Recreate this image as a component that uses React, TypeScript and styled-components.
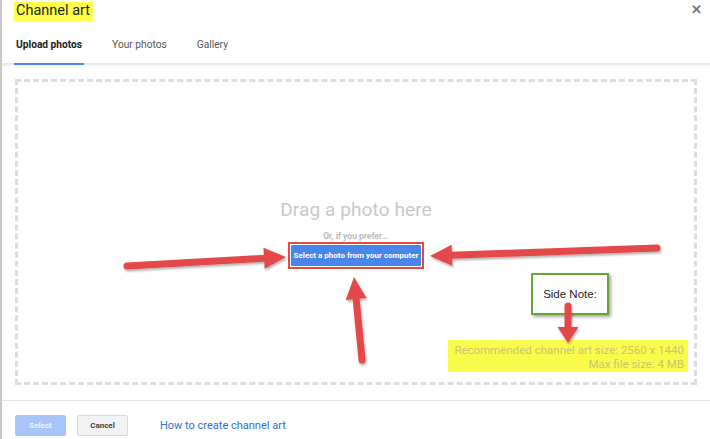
import React from 'react'
import styled, { createGlobalStyle } from 'styled-components'

const GlobalStyle = createGlobalStyle`
  html, body {
    margin: 0;
    padding: 0;
    background: #fff;
  }
  body {
    font-family: Roboto, 'Liberation Sans', Arial, sans-serif;
  }
`

const Dialog = styled.div`
  position: relative;
  width: 710px;
  height: 439px;
  box-sizing: border-box;
  border-left: 2px solid #c8c8c8;
  background: #fff;
  display: flex;
  flex-direction: column;
  overflow: hidden;
`

const Header = styled.div`
  display: flex;
  align-items: flex-start;
  justify-content: space-between;
  padding: 2px 8px 0 12px;
  height: 24px;
`

const Title = styled.h1`
  margin: 0;
  font-size: 14.5px;
  font-weight: 400;
  color: #222;
  background: #ffff4a;
  padding: 1px 3px 2px 2px;
  line-height: 16px;
`

const Close = styled.span`
  font-size: 13px;
  color: #777;
  font-weight: 700;
  line-height: 14px;
  margin-top: 1px;
`

const Tabs = styled.div`
  display: flex;
  flex-shrink: 0;
  padding-left: 12px;
  margin-top: 8px;
  border-bottom: 2px solid #ebebeb;
  box-shadow: 0 1px 1px rgba(0, 0, 0, 0.04);
`

const Tab = styled.div<{ $active?: boolean }>`
  font-size: 10.2px;
  line-height: 12px;
  color: ${p => (p.$active ? '#222' : '#555')};
  font-weight: ${p => (p.$active ? 700 : 400)};
  padding: 5px 2px 12px;
  margin-right: 26px;
  border-bottom: 2px solid ${p => (p.$active ? '#4a86e8' : 'transparent')};
  margin-bottom: -2px;
`

const Body = styled.div`
  flex-shrink: 0;
  padding: 14px 13px 0 13px;
  height: 336px;
  box-sizing: border-box;
  border-bottom: 1px solid #e5e5e5;
`

const DropZone = styled.div`
  height: 306px;
  box-sizing: border-box;
  border: 3px dashed #dcdcdc;
  display: flex;
  flex-direction: column;
  align-items: center;
  position: relative;
`

const DragText = styled.div`
  margin-top: 116px;
  font-size: 19px;
  color: #c8c8c8;
  letter-spacing: 0.1px;
`

const OrText = styled.div`
  margin-top: 10px;
  font-size: 8.5px;
  font-weight: 700;
  color: #bbb;
`

const Outline = styled.div`
  margin-top: 1px;
  border: 2px solid #e24a4a;
  padding: 1px;
`

const BlueButton = styled.button`
  display: block;
  background: #4a86e8;
  color: #fff;
  font-family: inherit;
  font-size: 8px;
  font-weight: 700;
  border: none;
  border-radius: 1px;
  height: 21px;
  width: 130px;
  padding: 0;
`

const SizeNote = styled.div`
  margin-top: auto;
  align-self: flex-end;
  margin-right: 6px;
  margin-bottom: 10px;
  background: #fbfb4d;
  padding: 3px 4px 1px 6px;
  text-align: right;
  font-size: 11.5px;
  line-height: 14px;
  color: #c6c66a;
`

const SideNote = styled.div`
  position: absolute;
  left: 513px;
  top: 191px;
  width: 78px;
  height: 42px;
  box-sizing: border-box;
  border: 2px solid #68a535;
  background: #fff;
  box-shadow: 2px 2px 3px rgba(0, 0, 0, 0.35);
  font-family: 'Liberation Sans', Arial, sans-serif;
  font-size: 11.5px;
  color: #222;
  display: flex;
  justify-content: center;
  padding-top: 13px;
`

const Footer = styled.div`
  display: flex;
  align-items: center;
  padding: 14px 0 0 13px;
`

const FooterButton = styled.button<{ $primary?: boolean }>`
  width: 51px;
  height: 21px;
  font-family: inherit;
  font-size: 8px;
  font-weight: 700;
  border-radius: 2px;
  padding: 0;
  margin-right: 11px;
  background: ${p => (p.$primary ? '#a7c5f9' : '#f3f3f3')};
  color: ${p => (p.$primary ? '#eef4ff' : '#444')};
  border: 1px solid ${p => (p.$primary ? '#a7c5f9' : '#d8d8d8')};
`

const HelpLink = styled.a`
  margin-left: 21px;
  font-size: 11px;
  color: #2c6ed8;
  text-decoration: none;
`

const Overlay = styled.svg`
  position: absolute;
  left: 0;
  top: 0;
  pointer-events: none;
`

type ArrowProps = { x1: number; y1: number; x2: number; y2: number; head?: number; w?: number }

const Arrow = ({ x1, y1, x2, y2, head = 22, w = 21 }: ArrowProps) => {
  const dx = x2 - x1
  const dy = y2 - y1
  const len = Math.hypot(dx, dy)
  const ux = dx / len
  const uy = dy / len
  const bx = x2 - ux * head
  const by = y2 - uy * head
  const px = -uy * (w / 2)
  const py = ux * (w / 2)
  return (
    <g filter="url(#shadow)">
      <line x1={x1} y1={y1} x2={bx + ux * 2} y2={by + uy * 2} stroke="#e34848" strokeWidth={7} strokeLinecap="round" />
      <polygon points={`${x2},${y2} ${bx + px},${by + py} ${bx - px},${by - py}`} fill="#e34848" />
    </g>
  )
}

export default function App() {
  return (
    <>
      <GlobalStyle />
      <Dialog>
        <Header>
          <Title>Channel art</Title>
          <Close>✕</Close>
        </Header>
        <Tabs>
          <Tab $active>Upload photos</Tab>
          <Tab>Your photos</Tab>
          <Tab>Gallery</Tab>
        </Tabs>
        <Body>
          <DropZone>
            <DragText>Drag a photo here</DragText>
            <OrText>Or, if you prefer...</OrText>
            <Outline>
              <BlueButton>Select a photo from your computer</BlueButton>
            </Outline>
            <SizeNote>
              Recommended channel art size: 2560 x 1440
              <br />
              Max file size: 4 MB
            </SizeNote>
            <SideNote>Side Note:</SideNote>
          </DropZone>
        </Body>
        <Footer>
          <FooterButton $primary>Select</FooterButton>
          <FooterButton>Cancel</FooterButton>
          <HelpLink href="#">How to create channel art</HelpLink>
        </Footer>
        <Overlay width={710} height={439} viewBox="0 0 710 439">
          <defs>
            <filter id="shadow" x="-20%" y="-20%" width="140%" height="140%">
              <feDropShadow dx="1" dy="2" stdDeviation="1.2" floodColor="#000" floodOpacity="0.3" />
            </filter>
          </defs>
          <Arrow x1={125} y1={266} x2={284} y2={257} />
          <Arrow x1={655} y1={248} x2={428} y2={256} />
          <Arrow x1={360} y1={360} x2={352} y2={277} />
          <Arrow x1={566} y1={306} x2={566} y2={343} head={16} w={21} />
        </Overlay>
      </Dialog>
    </>
  )
}
